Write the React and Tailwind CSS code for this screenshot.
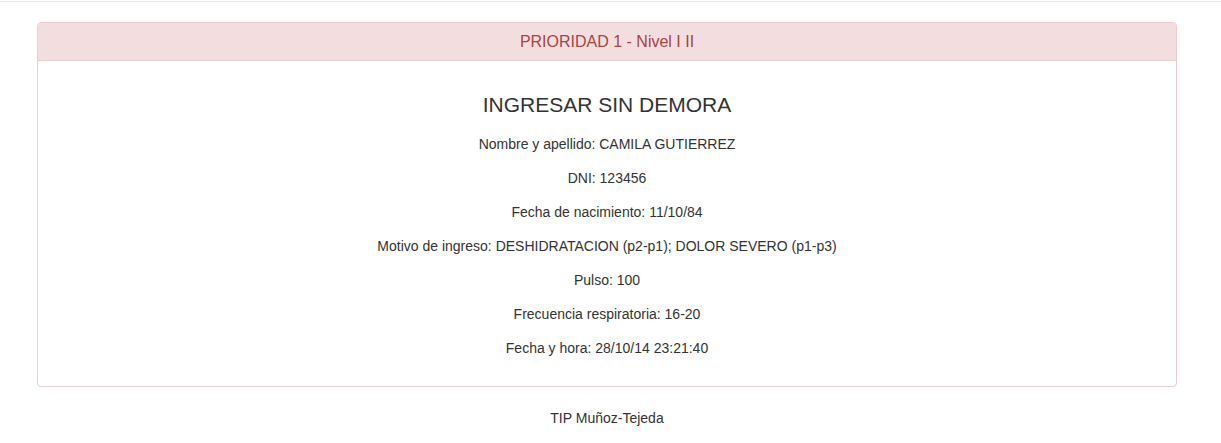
export default function App() {
  const rows = [
    'Nombre y apellido: CAMILA GUTIERREZ',
    'DNI: 123456',
    'Fecha de nacimiento: 11/10/84',
    'Motivo de ingreso: DESHIDRATACION (p2-p1); DOLOR SEVERO (p1-p3)',
    'Pulso: 100',
    'Frecuencia respiratoria: 16-20',
    'Fecha y hora: 28/10/14 23:21:40',
  ];

  return (
    <div className="min-h-[443px] bg-white text-[#333] text-[14px] leading-[20px] font-['Liberation_Sans',Arial,sans-serif]">
      <div className="h-[2px] border-b border-[#e7e7e7]" />

      <div className="ml-[37px] w-[1140px] mt-[20px]">
        <div className="border border-[#ebccd1] rounded-[4px] overflow-hidden">
          <div className="bg-[#f2dede] border-b border-[#ebccd1] h-[38px] flex items-center justify-center">
            <h3 className="text-[16px] leading-[18px] text-[#a94442]">PRIORIDAD 1 - Nivel I II</h3>
          </div>
          <div className="px-[15px] pt-[15px] pb-[14px] text-center">
            <h3 className="text-[21px] leading-[23px] mt-[17px] mb-[18px]">INGRESAR SIN DEMORA</h3>
            {rows.map((r) => (
              <p key={r} className="mb-[14px]">{r}</p>
            ))}
          </div>
        </div>

        <p className="text-center mt-[21px]">TIP Muñoz-Tejeda</p>
      </div>
    </div>
  );
}
